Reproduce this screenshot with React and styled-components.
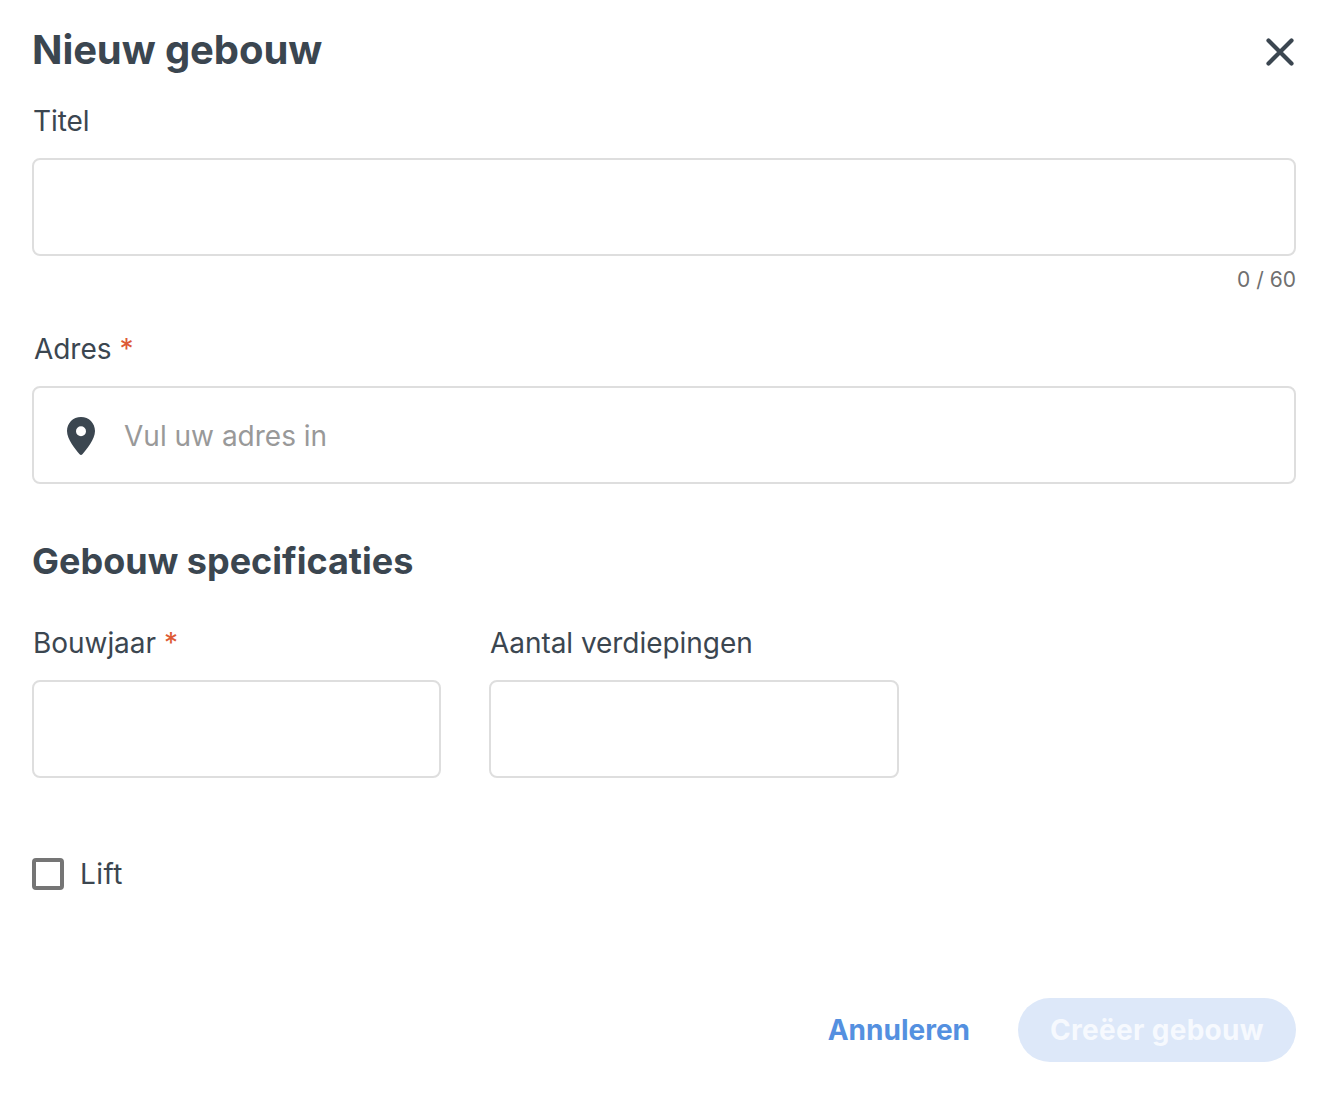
import React from 'react';
import styled, { createGlobalStyle } from 'styled-components';

const GlobalStyle = createGlobalStyle`
  html, body {
    margin: 0;
    padding: 0;
    background: #fff;
    font-family: Inter, "Liberation Sans", sans-serif;
    color: #3b4650;
  }
  * { box-sizing: border-box; }
`;

const Modal = styled.form`
  width: 1342px;
  height: 1096px;
  padding: 26px 46px 0 32px;
  display: flex;
  flex-direction: column;
`;

const Header = styled.div`
  display: flex;
  justify-content: space-between;
  align-items: center;
  height: 48px;
  margin-bottom: 28px;
`;

const Title = styled.h1`
  margin: 0;
  font-size: 40px;
  line-height: 48px;
  font-weight: 700;
  letter-spacing: -0.1px;
`;

const CloseButton = styled.button`
  border: 0;
  background: none;
  padding: 0;
  display: flex;
  margin-top: 4px;
  margin-right: 1px;
  color: #3b4650;
`;

const Label = styled.label`
  display: block;
  height: 36px;
  padding-top: 1px;
  font-size: 28px;
  line-height: 36px;
  letter-spacing: -0.05px;
  margin-left: ${(p) => p.$indent || 1}px;
  white-space: nowrap;
`;

const Required = styled.span`
  color: #dd5a35;
  margin-left: 8px;
`;

const InputBox = styled.div`
  display: flex;
  align-items: center;
  height: 98px;
  margin-top: 20px;
  padding: 0 32px;
  border: 2px solid #dedede;
  border-radius: 8px;
  background: #fff;
`;

const Input = styled.input`
  border: 0;
  outline: 0;
  flex: 1;
  min-width: 0;
  padding: 2px 0 0;
  font: inherit;
  font-size: 28px;
  margin-left: 28px;
  color: #3b4650;
  &::placeholder { color: #999; opacity: 1; }
`;

const Counter = styled.div`
  margin: 11px 0 37px;
  text-align: right;
  font-size: 21px;
  line-height: 26px;
  color: #6f6f6f;
`;

const SectionTitle = styled.h2`
  margin: 55px 0 0;
  font-size: 36px;
  line-height: 44px;
  font-weight: 700;
`;

const FieldRow = styled.div`
  display: flex;
  gap: 48px;
  margin-top: 41px;
`;

const Field = styled.div`
  width: ${(p) => p.$width}px;
`;

const CheckRow = styled.label`
  display: flex;
  align-items: center;
  gap: 16px;
  margin-top: 78px;
  font-size: 28px;
  line-height: 36px;
  letter-spacing: 0.4px;
`;

const CheckBox = styled.span`
  width: 32px;
  height: 32px;
  border: 4px solid #757575;
  border-radius: 4px;
`;

const Actions = styled.div`
  display: flex;
  justify-content: flex-end;
  align-items: center;
  gap: 48px;
  margin-top: 106px;
`;

const TextButton = styled.button`
  border: 0;
  padding: 0;
  background: none;
  font: inherit;
  font-size: 28px;
  font-weight: 700;
  color: #5490e0;
`;

const PrimaryButton = styled.button`
  width: 278px;
  height: 64px;
  border: 0;
  border-radius: 32px;
  background: #dde8f9;
  color: #f6f9fe;
  font: inherit;
  font-size: 28px;
  font-weight: 700;
  letter-spacing: 0.3px;
`;

const Pin = styled.svg`
  flex: none;
  margin-top: 2px;
`;

const PinIcon = () => (
  <Pin width="30" height="40" viewBox="0 0 30 40" aria-hidden="true">
    <path
      fill="#3b4650"
      fillRule="evenodd"
      d="M15 1C7 1 1 7.2 1 15c0 8.5 8.6 18.6 12.6 23.3.8.9 2 .9 2.8 0C20.4 33.6 29 23.5 29 15 29 7.2 23 1 15 1Zm0 9.2a5 5 0 1 1 0 10 5 5 0 0 1 0-10Z"
    />
  </Pin>
);

const CloseIcon = () => (
  <svg width="30" height="30" viewBox="0 0 30 30" aria-hidden="true">
    <path d="M3.5 3.5l23 23M26.5 3.5l-23 23" stroke="currentColor" strokeWidth="4.2" strokeLinecap="round" />
  </svg>
);

export default function App() {
  return (
    <>
      <GlobalStyle />
      <Modal>
        <Header>
          <Title>Nieuw gebouw</Title>
          <CloseButton type="button"><CloseIcon /></CloseButton>
        </Header>
        <Label>Titel</Label>
        <InputBox />
        <Counter>0 / 60</Counter>
        <Label $indent={2}>Adres<Required>*</Required></Label>
        <InputBox>
          <PinIcon />
          <Input placeholder="Vul uw adres in" />
        </InputBox>
        <SectionTitle>Gebouw specificaties</SectionTitle>
        <FieldRow>
          <Field $width={409}>
            <Label>Bouwjaar<Required>*</Required></Label>
            <InputBox />
          </Field>
          <Field $width={410}>
            <Label>Aantal verdiepingen</Label>
            <InputBox />
          </Field>
        </FieldRow>
        <CheckRow><CheckBox />Lift</CheckRow>
        <Actions>
          <TextButton type="button">Annuleren</TextButton>
          <PrimaryButton type="button" disabled>Creëer gebouw</PrimaryButton>
        </Actions>
      </Modal>
    </>
  );
}
